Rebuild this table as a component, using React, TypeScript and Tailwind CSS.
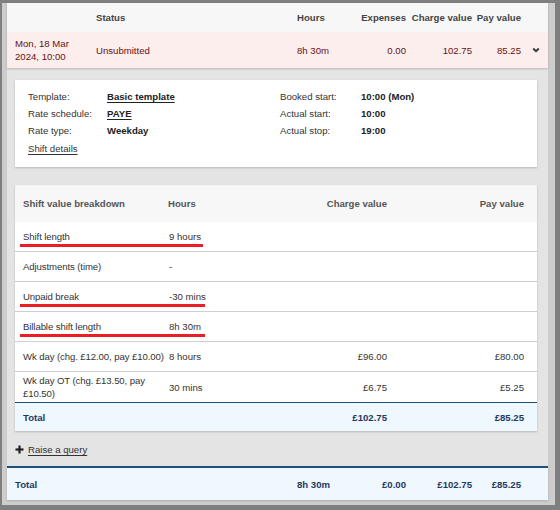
const rows = [
  { label: "Shift length", hours: "9 hours", charge: "", pay: "", mark: "w-[183px]" },
  { label: "Adjustments (time)", hours: "-", charge: "", pay: "", mark: "" },
  { label: "Unpaid break", hours: "-30 mins", charge: "", pay: "", mark: "w-[185px]" },
  { label: "Billable shift length", hours: "8h 30m", charge: "", pay: "", mark: "w-[185px]" },
  { label: "Wk day (chg. £12.00, pay £10.00)", hours: "8 hours", charge: "£96.00", pay: "£80.00", mark: "" },
  { label: "Wk day OT (chg. £13.50, pay £10.50)", hours: "30 mins", charge: "£6.75", pay: "£5.25", mark: "" },
];

const details = [
  { label: "Template:", value: "Basic template", link: true, right: "Booked start:", rightValue: "10:00 (Mon)" },
  { label: "Rate schedule:", value: "PAYE", link: true, right: "Actual start:", rightValue: "10:00" },
  { label: "Rate type:", value: "Weekday", link: false, right: "Actual stop:", rightValue: "19:00" },
];

const cols = "grid grid-cols-[89px_201px_60px_49px_66px_49px_1fr] items-center";
const tableCols = "grid grid-cols-[153px_119px_100px_1fr] items-center";

function Chevron() {
  return (
    <svg width="8" height="6" viewBox="0 0 8 6" className="ml-[11px]">
      <path d="M1.2 1.5 L4 4.2 L6.8 1.5" fill="none" stroke="#333" strokeWidth="1.8" />
    </svg>
  );
}

function Plus() {
  return (
    <svg width="9" height="9" viewBox="0 0 9 9">
      <rect x="3.4" y="0.5" width="2.2" height="8" fill="#222" />
      <rect x="0.5" y="3.4" width="8" height="2.2" fill="#222" />
    </svg>
  );
}

export default function App() {
  return (
    <div className="w-[560px] h-[510px] bg-[#7f7f7f] pt-[3px] pl-[2px] pr-[5px] pb-[5px] font-['Liberation_Sans',Arial,sans-serif] text-[9.6px] leading-[13px] text-[#333]">
      <div className="h-full bg-[#cdcdcd] pl-[5px] pr-[7px] pb-[5px]">
        <div className="h-full bg-[#e4e4e4] flex flex-col">
          {/* Shift summary */}
          <div className="shadow-[0_1px_2px_rgba(0,0,0,0.2)]">
            <div className={`${cols} h-[29px] bg-[#f7f7f7] font-bold text-[#444]`}>
              <span />
              <span>Status</span>
              <span>Hours</span>
              <span className="text-right">Expenses</span>
              <span className="text-right">Charge value</span>
              <span className="text-right">Pay value</span>
              <span />
            </div>
            <div className={`${cols} h-[36px] bg-[#fdeeee] text-[#661212]`}>
              <span className="pl-[8px]">
                Mon, 18 Mar
                <br />
                2024, 10:00
              </span>
              <span>Unsubmitted</span>
              <span>8h 30m</span>
              <span className="text-right">0.00</span>
              <span className="text-right">102.75</span>
              <span className="text-right">85.25</span>
              <Chevron />
            </div>
          </div>

          {/* Details card */}
          <div className="ml-[8px] mr-[11px] mt-[12px] h-[87px] bg-white shadow-[0_1px_2px_rgba(0,0,0,0.2)] pl-[13px] pt-[10px]">
            <div className="flex flex-col gap-[4px]">
              {details.map((d) => (
                <div key={d.label} className="grid grid-cols-[79px_173px_81px_1fr]">
                  <span>{d.label}</span>
                  <span className={`font-bold text-[#222] ${d.link ? "underline underline-offset-2" : ""}`}>{d.value}</span>
                  <span>{d.right}</span>
                  <span className="font-bold text-[#222]">{d.rightValue}</span>
                </div>
              ))}
            </div>
            <a className="block mt-[5px] underline underline-offset-2 text-[#333]">Shift details</a>
          </div>

          {/* Breakdown table */}
          <div className="ml-[8px] mr-[11px] mt-[18px] bg-white shadow-[0_1px_2px_rgba(0,0,0,0.2)]">
            <div className={`${tableCols} h-[37px] bg-[#f7f7f7] font-bold text-[#555]`}>
              <span className="pl-[8px]">Shift value breakdown</span>
              <span>Hours</span>
              <span className="text-right">Charge value</span>
              <span className="text-right pr-[13px]">Pay value</span>
            </div>
            {rows.map((r, i) => (
              <div
                key={r.label}
                className={`${tableCols} relative h-[30px] ${i < rows.length - 1 ? "border-b border-[#cfcfcf]" : ""}`}
              >
                <span className="pl-[8px] tracking-[-0.1px]">{r.label}</span>
                <span className="pl-[1px]">{r.hours}</span>
                <span className="text-right">{r.charge}</span>
                <span className="text-right pr-[13px]">{r.pay}</span>
                {r.mark && <span className={`absolute left-[5px] top-[22px] h-[3px] bg-[#ec1c24] ${r.mark}`} />}
              </div>
            ))}
            <div className={`${tableCols} h-[29px] border-t border-[#1d4f7f] bg-[#eff7ff] font-bold text-[#1f3a5c]`}>
              <span className="pl-[8px]">Total</span>
              <span />
              <span className="text-right">£102.75</span>
              <span className="text-right pr-[13px]">£85.25</span>
            </div>
          </div>

          {/* Raise a query */}
          <div className="h-[35px] flex items-center gap-[4px] pl-[8px] pt-[2px]">
            <Plus />
            <a className="underline underline-offset-2 text-[#333]">Raise a query</a>
          </div>

          {/* Bottom total */}
          <div className={`${cols} h-[34px] border-t-2 border-[#1d4f7f] bg-[#eff7ff] font-bold text-[#1f3a5c] shadow-[0_1px_2px_rgba(0,0,0,0.15)]`}>
            <span className="pl-[8px]">Total</span>
            <span />
            <span>8h 30m</span>
            <span className="text-right">£0.00</span>
            <span className="text-right">£102.75</span>
            <span className="text-right">£85.25</span>
            <span />
          </div>
        </div>
      </div>
    </div>
  );
}
